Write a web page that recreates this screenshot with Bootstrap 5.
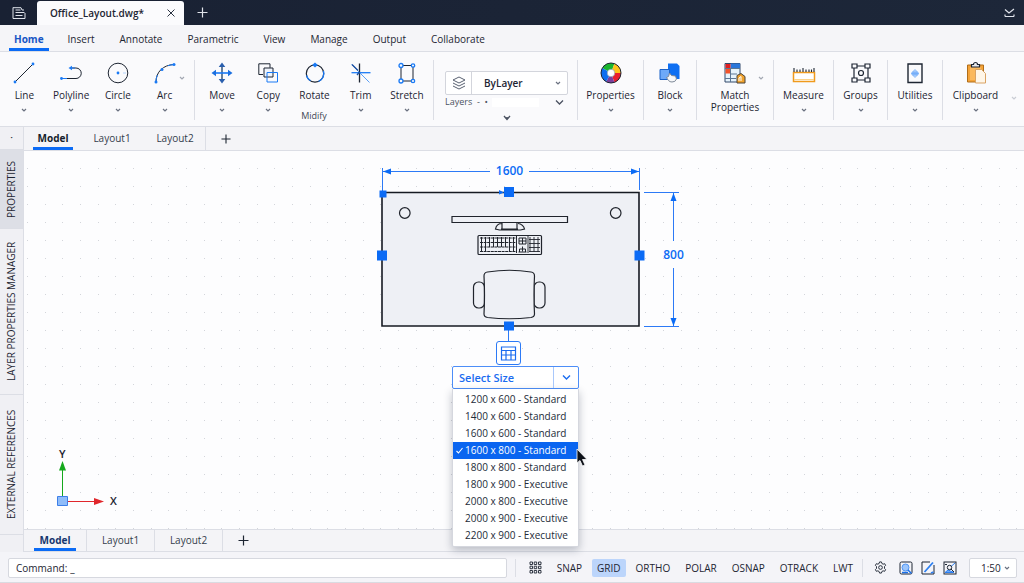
<!DOCTYPE html>
<html lang="en">
<head>
<meta charset="utf-8">
<meta name="viewport" content="width=device-width, initial-scale=1">
<title>Office_Layout.dwg</title>
<link rel="stylesheet" href="https://cdn.jsdelivr.net/npm/bootstrap@5.3.0/dist/css/bootstrap.min.css">
<style>
:root { --ink:#1d2532; --blue:#0b6bf5; --line:#dcdee5; --chrome:#f4f4f8; }
body { font-family:"Open Sans","Noto Sans",sans-serif; font-size:10px; line-height:16px; color:var(--ink); background:var(--chrome); }
button, input, select { font:inherit; color:inherit; }
button { background:none; border:0; padding:0; }
svg { display:block; fill:none; stroke:var(--ink); flex:none; }
.centered { display:grid; place-items:center; }
.titlebar { background:linear-gradient(90deg,#192133,#1d2739); height:25px; padding-right:9px; }
.titlebar svg { stroke:#dfe3ea; }
.file-tab { background:#fbfbfd; width:147px; border-radius:3px 3px 0 0; margin-top:1px; font-weight:600; padding:0 8px 0 13px; }
.titlebar .file-tab svg { stroke:#2a3342; }
.app-menu, .new-tab { width:37px; }
.menu-tabs { height:27px; padding-left:9px; background:#f5f5f8; border-bottom:1px solid var(--line); }
.menu-tabs a { color:inherit; text-decoration:none; line-height:24px; padding:2px 4px 0; margin-right:17px; border-bottom:3px solid transparent; }
.menu-tabs a.on { color:#1856c4; font-weight:700; border-color:var(--blue); padding:2px 5px 0; margin-right:15px; }
.ribbon { height:75px; background:#fafafc; border-bottom:1px solid var(--line); }
.r-group { flex:1 1 55px; border-right:1px solid var(--line); margin:8px 0 6px; min-width:0; position:relative; }
.g-draw { flex-basis:195px; padding:0 6px 0 1px; }
.g-modify { flex-basis:239px; padding:0 3px 0 4px; }
.g-layers { flex-basis:144px; padding:11px 9px 0 11px; }
.g-props { flex-basis:66px; }
.g-block { flex-basis:53px; }
.g-match { flex-basis:77px; }
.g-measure { flex-basis:60px; }
.g-groups { flex-basis:54px; }
.g-clip { flex-basis:65px; border:0; }
.g-end { flex-basis:16px; border:0; padding:29px 0 0 2px; }
.g-end .caret { stroke:#c9ccd4; }
.tool { display:flex; flex-direction:column; align-items:center; flex:1 1 0; min-width:0; line-height:12px; padding-top:1px; position:relative; white-space:nowrap; }
.tool svg.ico { width:24px; height:24px; margin-bottom:4px; }
.tool svg.caret { margin-top:6px; }
.caret { width:8px; height:6px; stroke:#6a7180; }
.tool svg.side-caret { position:absolute; left:50%; margin:0 0 0 13px; top:15px; stroke:#a2a7b2; }
.g-match svg.side-caret { margin-left:22px; }
.group-name { position:absolute; bottom:-2px; left:0; right:0; text-align:center; font-size:9px; line-height:12px; color:#3f4755; }
.layer-box { border:1px solid #d3d5dc; border-radius:2px; background:#fff; height:24px; }
.layer-box span { width:26px; border-right:1px solid #d3d5dc; }
.layer-box select, .scale select { appearance:none; border:0; background:transparent; outline:0; }
.layer-box select { font-weight:600; padding:0 0 0 12px; width:100%; }
.pick { position:relative; }
.pick svg { position:absolute; right:5px; top:50%; margin-top:-3px; pointer-events:none; }
.layer-row { font-size:9px; line-height:14px; color:#4c5362; }
.layer-row i { flex:1; height:9px; background:#fff; margin:0 16px 0 4px; }
.layer-row svg, .more { stroke:#4a5160; }
.side { width:24px; background:#f0f0f4; border-right:1px solid var(--line); }
.side button { writing-mode:vertical-rl; transform:rotate(180deg); border-top:1px solid var(--line); width:23px; text-align:center; line-height:23px; white-space:nowrap; }
.side button.on { background:#dddfe6; }
.side .s-top { height:23px; }
.side .s-prop { height:79px; }
.side .s-layer { height:166px; }
.side .s-ext { height:140px; }
.doc-tabs { height:24px; background:#f4f4f7; border-bottom:1px solid var(--line); }
.doc-tabs a { color:#353d4c; text-decoration:none; line-height:20px; padding-top:1px; border-bottom:3px solid transparent; text-align:center; }
.doc-tabs a.on { font-weight:700; color:#161e2c; border-color:var(--blue); }
.top-tabs { padding-left:9px; }
.top-tabs a { width:40px; margin-right:22px; }
.top-tabs a:nth-child(2) { margin:0 23px 0 -3px; }
.top-tabs .tail { width:1px; background:var(--line); margin-left:-12px; margin-right:15px; }
.low-tabs { height:23px; border-top:1px solid var(--line); }
.low-tabs .cell { width:68px; border-right:1px solid var(--line); display:flex; justify-content:center; }
.low-tabs .cell:first-child { width:63px; }
.low-tabs a { width:42px; line-height:16px; padding-top:2px; }
.low-tabs a.on { color:#17376f; }
.low-tabs button { margin-left:15px; }
.plane { position:relative; background:#fdfdfe; }
.grid-dots { position:absolute; inset:0; width:100%; height:100%; }
.desk { position:absolute; left:352px; top:11px; z-index:5; width:315px; }
.ucs { position:absolute; left:30px; bottom:19px; }
svg text { stroke:none; font-size:12px; font-weight:600; }
.ucs text { font-size:11px; }
.grip-btn { width:25px; height:24px; margin-left:120px; border:1px solid #2c7af6; border-radius:3px; background:#fff; margin-bottom:1px; }
.grip-btn svg, .size-head svg { stroke:#1a6cf0; }
.size-pick { width:127px; margin-left:76px; }
.size-head { height:23px; border:1px solid #4d8ef8; border-radius:2px; background:#fff; color:#1a6cf0; font-size:11px; }
.size-head .lbl { flex:1; text-align:left; padding-left:6px; font-weight:600; border-right:1px solid #a9c8fb; }
.size-head .dd { width:24px; }
.size-pick .dropdown-menu { position:static; display:block; width:100%; min-width:0; padding:2px 0 2px; border:1px solid #d5d7de; border-top:0; border-radius:0 0 2px 2px; box-shadow:0 3px 8px rgba(25,35,60,.28); font-size:10px; }
.size-pick .dropdown-item { padding:0 0 0 12px; line-height:17px; color:#232b38; position:relative; }
.size-pick .dropdown-item.active { background:#0a65f0; color:#fff; }
.dropdown-item .tick { position:absolute; left:2px; top:4px; stroke:#fff; }
.pointer { position:absolute; left:200px; top:286px; }
.status { height:31px; padding:1px 7px 0 8px; border-bottom:1px solid #d9dbe1; }
.cmd { flex:1; height:20px; border:1px solid #d6d8df; border-radius:2px; background:#fff; padding-left:7px; }
.cmd input { border:0; outline:0; padding:0 0 0 3px; flex:1; min-width:0; background:transparent; }
.vr-line { width:1px; height:18px; background:var(--line); }
.modes { gap:5px; }
.modes button { height:18px; padding:0 5px; border-radius:2px; line-height:18px; }
.modes button.on { background:#bcd5fb; }
.helpers { margin-left:11px; margin-right:12px; }
.scale { width:48px; height:20px; border:1px solid #d6d8df; border-radius:2px; background:#fff; }
.scale select { width:100%; padding:1px 0 0 11px; line-height:16px; }
</style>
</head>
<body class="d-flex flex-column vh-100 overflow-hidden">
<svg width="0" height="0" class="position-absolute" aria-hidden="true">
  <symbol id="caret" viewBox="0 0 8 6"><path d="M2 2l2 2 2-2" stroke-width="1.2"/></symbol>
  <symbol id="plus" viewBox="0 0 11 11"><path d="M5.500 .5v10M.5 5.500h10" stroke-width="1.200"/></symbol>
</svg>

<header class="titlebar d-flex">
  <button class="app-menu centered" aria-label="Application menu"><svg width="14" height="12" viewBox="0 0 14 12"><path d="M1 .5v11h12V6M1 .7h8l1 2.300h2M3.500 3h5M3.500 5.500h9M3.500 8.500h7" stroke-width="1"/></svg></button>
  <div class="file-tab d-flex align-items-center justify-content-between"><span>Office_Layout.dwg*</span><button aria-label="Close tab"><svg width="10" height="10" viewBox="0 0 10 10"><path d="M1.500 1.500l7 7M8.500 1.500l-7 7"/></svg></button></div>
  <button class="new-tab centered" aria-label="New tab"><svg width="11" height="11"><use href="#plus"/></svg></button>
  <button class="ms-auto" aria-label="Collapse"><svg width="11" height="10" viewBox="0 0 11 10"><path d="M1 1.500l4 3.500 5-4M1 8.500h9M1 6.500v2M10 6.500v2" stroke-width="1.200"/></svg></button>
</header>

<nav class="menu-tabs d-flex" aria-label="Ribbon">
  <a class="on" href="#">Home</a><a href="#">Insert</a><a href="#">Annotate</a><a href="#">Parametric</a><a href="#">View</a><a href="#">Manage</a><a href="#">Output</a><a href="#">Collaborate</a>
</nav>

<div class="ribbon d-flex" role="toolbar" aria-label="Home tools">
  <div class="r-group g-draw d-flex">
    <button class="tool"><svg class="ico" viewBox="0 0 24 24"><path d="M3 21L21 3"/><g fill="#1a7af5" stroke="none"><circle cx="3" cy="21" r="1.400"/><circle cx="21" cy="3" r="1.400"/></g></svg>Line<svg class="caret"><use href="#caret"/></svg></button>
    <button class="tool"><svg class="ico" viewBox="0 0 24 24"><path d="M2 17.500h15a5 5 0 0 0 0-10.500h-6"/><path d="M2 17.500h6M11 7h5" stroke="#1a7af5"/><g fill="#1a7af5" stroke="none"><circle cx="2.500" cy="17.500" r="1.400"/><path d="M9.500 7l3.500-2.200v4.400z"/></g></svg>Polyline<svg class="caret"><use href="#caret"/></svg></button>
    <button class="tool"><svg class="ico" viewBox="0 0 24 24"><circle cx="12" cy="12" r="9.800"/><circle cx="12" cy="12" r="1.400" fill="#1a7af5" stroke="none"/><path d="M17 12h3" stroke="#b5d4fb"/></svg>Circle<svg class="caret"><use href="#caret"/></svg></button>
    <button class="tool"><svg class="ico" viewBox="0 0 24 24"><path d="M3 21C3 11 10 4 21 3.500"/><path d="M3 21c0-3 .5-5 1.500-7M15 4.700c2-.8 4-1 6-1.200" stroke="#1a7af5"/><g fill="#1a7af5" stroke="none"><circle cx="3" cy="21" r="1.500"/><circle cx="9" cy="8.500" r="1.500"/><circle cx="21" cy="3.500" r="1.500"/></g></svg>Arc<svg class="caret"><use href="#caret"/></svg><svg class="caret side-caret"><use href="#caret"/></svg></button>
  </div>
  <div class="r-group g-modify d-flex">
    <button class="tool"><svg class="ico" viewBox="0 0 24 24"><path d="M12 4v16" stroke="#27496f" stroke-width="1.400"/><path d="M4 12h16" stroke="#1a7af5" stroke-width="1.600"/><g stroke="none" fill="#2a5fae"><path d="M12 1.500l3.300 4.500H8.700zM12 22.500l3.300-4.500H8.700z"/><path fill="#1a6fe0" d="M1.500 12L6 8.700v6.600zM22.500 12L18 8.700v6.600z"/></g></svg>Move<svg class="caret"><use href="#caret"/></svg></button>
    <button class="tool"><svg class="ico" viewBox="0 0 24 24"><path d="M7 13.500H2.800V2.800H14v4"/><path d="M8 7h9v9H8z" fill="#eef3fb"/><path d="M11 11.500h10.500V21H11z" stroke="#1a7af5"/></svg>Copy<svg class="caret"><use href="#caret"/></svg></button>
    <button class="tool"><svg class="ico" viewBox="0 0 24 24"><circle cx="12" cy="12.500" r="8.700" stroke-width="1.200"/><path d="M20.500 10a8.700 8.700 0 0 1-5 10.500M3.500 14.500a8.700 8.700 0 0 0 4 5.300" stroke="#1a7af5" stroke-width="1.300"/><path d="M12 1.500l2.800 2.500L12 6.500 9.200 4z" fill="#1a7af5" stroke="none"/></svg>Rotate</button>
    <button class="tool"><svg class="ico" viewBox="0 0 24 24"><path d="M10.500 2.500v19" stroke-width="1.300"/><path d="M2.500 3.500l18 18" stroke="#5ba0f7"/><path d="M2.500 11.700h19" stroke="#1a7af5" stroke-width="1.300"/><path d="M3 3.500l6 6M8 14l2.500-3" stroke="#1b4fa0" stroke-width="1.300"/></svg>Trim<svg class="caret"><use href="#caret"/></svg></button>
    <button class="tool"><svg class="ico" viewBox="0 0 24 24"><path d="M6 4.500h12v15.500H6z"/><g fill="#fafafc" stroke="#1a7af5" stroke-width="1.300"><circle cx="6" cy="4.500" r="2"/><circle cx="18" cy="4.500" r="1.700"/><circle cx="6" cy="20" r="2"/><circle cx="18" cy="20" r="1.700"/></g></svg>Stretch<svg class="caret"><use href="#caret"/></svg></button>
    <span class="group-name">Midify</span>
  </div>
  <div class="r-group g-layers">
    <div class="layer-box d-flex"><span class="centered"><svg width="16" height="16" viewBox="0 0 16 16"><path d="M8 2l6 3-6 3-6-3zM2 8l6 3 6-3M2 11l6 3 6-3" stroke="#596171"/></svg></span><div class="pick flex-fill d-flex"><select aria-label="Layer"><option>ByLayer</option></select><svg class="caret"><use href="#caret"/></svg></div></div>
    <div class="layer-row d-flex align-items-center"><span>Layers&nbsp; -&nbsp; •</span><i></i><svg class="me-1" width="9" height="7" viewBox="0 0 9 7"><path d="M1 1.500l3.500 3.500L8 1.500" stroke-width="1.300"/></svg></div>
    <svg class="more mx-auto mt-1" width="10" height="8" viewBox="0 0 10 8"><path d="M2 3l3 3.500L8 3M5 6V4" stroke-width="1.300"/></svg>
  </div>
  <div class="r-group g-props d-flex"><button class="tool"><svg class="ico" viewBox="0 0 24 24"><g stroke="none"><path fill="#19b52e" d="M12 12L3.300 7A10 10 0 0 1 15.500 2.600z"/><path fill="#ffc21a" d="M12 12l3.500-9.400A10 10 0 0 1 22 12z"/><path fill="#ea1f2d" d="M12 12h10a10 10 0 0 1-6.500 9.400z"/><path fill="#7a3f9d" d="M12 12l3.500 9.400A10 10 0 0 1 7 20.700z"/><path fill="#0d6ef0" d="M12 12L7 20.700A10 10 0 0 1 3.300 7z"/></g><circle cx="12" cy="12" r="10"/><circle cx="12" cy="12" r="3.800" fill="#fff" stroke="#8090a0" stroke-width=".6"/></svg>Properties<svg class="caret"><use href="#caret"/></svg></button></div>
  <div class="r-group g-block d-flex"><button class="tool"><svg class="ico" viewBox="0 0 24 24"><path d="M10 2.500h9l2.500 2.500v13H10z" fill="#0e6ff2" stroke="none"/><path d="M2 8.500h9.500v10H2z" fill="#6ea9f8" stroke="#1b62c8"/><path d="M8.500 16.500l2-1 1-3.500 2 2.500 4 .5 1 3a4.500 4.500 0 0 1-4.500 3c-3 0-4-2-5.500-4.500z" fill="#f7f8fa" stroke="#7f8998"/></svg>Block<svg class="caret"><use href="#caret"/></svg></button></div>
  <div class="r-group g-match d-flex"><button class="tool"><svg class="ico" viewBox="0 0 24 24"><path d="M2 2.500h15v18.500H2z" fill="#e6f3fc" stroke="#33496a"/><path d="M7.500 2.500H17V7H7.500z" fill="#2a76da" stroke="none"/><path d="M2.500 3h5v4h-5z" fill="#e01f22" stroke="none"/><path d="M2.500 8h4.500v4.500H2.500z" fill="#f2532b" stroke="none"/><path d="M2 7.500h15M7.500 13H14M2 17.500h11M7.500 7v14" stroke="#5c7694"/><path d="M14 14.500l4-2 4 3v6.500h-8z" fill="#f0a22c" stroke="#4b4338"/><path d="M16 20v-3l2-1.500V20" stroke="#fff"/></svg><span>Match<br>Properties</span><svg class="caret side-caret"><use href="#caret"/></svg></button></div>
  <div class="r-group g-measure d-flex"><button class="tool"><svg class="ico" viewBox="0 0 24 24"><path d="M1.500 11.500h21v9h-21z" fill="#fff" stroke="#f09a1c" stroke-width="1.500"/><path d="M2 18.500h20" stroke="#fbd28a"/><path d="M2 7v4M5 8.500V11M8 8.500V11M11 7v4M14 8.500V11M17 8.500V11M22 7v4M19.500 8.500V11" stroke-width="1.100"/></svg>Measure<svg class="caret"><use href="#caret"/></svg></button></div>
  <div class="r-group g-groups d-flex"><button class="tool"><svg class="ico" viewBox="0 0 24 24" stroke-width="1.200"><path d="M3 3h5v4H3zM16 3h5v4h-5zM3 17h5v4H3zM16 17h5v4h-5zM8 5h8M8 19h8M5 7v10M19 7v10"/><circle cx="12" cy="12" r="2.500"/></svg>Groups<svg class="caret"><use href="#caret"/></svg></button></div>
  <div class="r-group d-flex"><button class="tool"><svg class="ico" viewBox="0 0 24 24"><path d="M5 3h14v18.500H5z" stroke-width="1.400"/><path d="M8.500 11h7v3h-7z" fill="#8ebdfb" stroke="none"/><path d="M8 12.500h8M12 8.500l2.500 2.500h-5zM12 16.500l2.500-2.500h-5z" stroke="#6aa7f8" fill="#b9d7fd" stroke-width=".7"/></svg>Utilities<svg class="caret"><use href="#caret"/></svg></button></div>
  <div class="r-group g-clip d-flex"><button class="tool"><svg class="ico" viewBox="0 0 24 24"><path d="M3.500 4h16v17h-16z" fill="#f4a338" stroke="#b06d18"/><path d="M6 6h11v4l-5 9H6z" fill="#fbb95d" stroke="none"/><path d="M7.500 6V3.500h2a2 2 0 0 1 4 0h2V6z" fill="#e9ebef" stroke-width="1.200"/><path d="M11.500 8.500h6l4 4V22h-10z" fill="#fff6e8" stroke="#d9a364"/></svg>Clipboard<svg class="caret"><use href="#caret"/></svg></button></div>
  <div class="r-group g-end"><button aria-label="More tools"><svg class="caret"><use href="#caret"/></svg></button></div>
</div>

<main class="d-flex flex-fill" style="min-height:0">
  <aside class="side d-flex flex-column" aria-label="Palettes">
    <button class="s-top" aria-label="Expand">·</button>
    <button class="s-prop on">PROPERTIES</button>
    <button class="s-layer">LAYER PROPERTIES MANAGER</button>
    <button class="s-ext">EXTERNAL REFERENCES</button>
  </aside>
  <div class="d-flex flex-column flex-fill" style="min-width:0">
    <nav class="doc-tabs top-tabs d-flex" aria-label="Layouts"><a class="on" href="#">Model</a><a href="#">Layout1</a><a href="#">Layout2</a><span class="tail"></span><button aria-label="Add layout"><svg width="10" height="10"><use href="#plus"/></svg></button></nav>
    <section class="plane flex-fill" aria-label="Drawing">
      <svg class="grid-dots" aria-hidden="true"><defs><pattern id="dots" width="53" height="18" patternUnits="userSpaceOnUse"><path d="M3 17h1v1h-1zM21 17h1v1h-1zM38 17h1v1h-1z" fill="#d3d5da" stroke="none"/></pattern></defs><rect width="100%" height="100%" fill="url(#dots)" stroke="none"/></svg>
      <div class="desk">
        <svg width="315" height="179" viewBox="376 162 315 179">
          <path d="M382 192.500h257v133.500H382z" fill="#eef0f5" stroke="#161a22" stroke-width="1.600"/>
          <g stroke="#2c7af6"><path d="M382.500 168v24M639.500 168v22M383 171.500h107M529 171.500h110M644 192.500h35M644 326.500h35M673.500 193v48M673.500 268v58M508.500 326v15"/></g>
          <g fill="#0b6bf5" stroke="none"><path d="M383 171.500l8-3v6zM639 171.500l-8-3v6zM673.500 193l-3 8h6zM673.500 326l-3-8h6z"/>
          <text x="509.500" y="175" text-anchor="middle">1600</text><text x="673.500" y="259" text-anchor="middle">800</text></g>
          <g stroke="#20242c" stroke-width="1.200"><circle cx="404.800" cy="213" r="5.300"/><circle cx="615.700" cy="213" r="5.300"/>
          <path d="M452 216.500h115.500v6H452z"/><path d="M502 223v5.500M517 223v5.500M502 223.500c-4 0-6 3-6.500 5.500l4 1h21l4-1c-.5-2.500-3-5.500-6.500-5.500M501 229h17"/>
          <rect x="478" y="235.500" width="63.500" height="19" rx="1"/></g>
          <g stroke="#20242c"><path d="M480 238h36M480 242.500h36M480 247h36M480 251.500h36" stroke-dasharray="3 .6"/><path d="M481.500 237v15M485.500 237v15M489.500 237v10M493.500 237v10M497.500 237v10M501.500 237v10M505.500 237v10M509.500 237v15M513.500 237v15M516.500 236v17"/><path d="M519 238h7v6h-7zM522.500 238v6M519 241h7M518.500 252h8M519.500 249h6v3M522.500 246.500v5M519.500 249v3"/><path d="M530 237v15M534 237v15M538 237v15M529 239.500h11M529 243.500h11M529 247.500h11M529 251.500h11M528 236v17" stroke-width=".9"/></g>
          <g stroke="#20242c" stroke-width="1.200"><rect x="473.500" y="282" width="11" height="26" rx="5"/><rect x="534" y="282" width="11" height="26" rx="5"/><path d="M487.500 272q22-3.500 43.500 0 3.500.5 3.500 4-1 19 0 38 0 3-3.500 3.500-22 2.500-43.500 0-3.500-.5-3.500-3.500 1-19 0-38 0-3.500 3.500-4z" fill="#eef0f5"/></g>
          <g fill="#0b6bf5" stroke="none"><path d="M379.500 190.500h7v7h-7zM504 187h10v10h-10zM377 250.500h10v10h-10zM634.500 250.500h10v10h-10zM504 321.500h10v9h-10zM499 190l5 2.500-5 2z"/></g>
        </svg>
        <button class="grip-btn centered" aria-label="Size table"><svg width="17" height="15" viewBox="0 0 17 15" stroke-width="1.200"><path d="M1.500 1h14v13h-14zM1.500 4.500h14M1.500 9h14M6 4.500V14M11 4.500V14"/></svg></button>
        <div class="size-pick">
          <div class="size-head d-flex align-items-stretch"><button class="lbl">Select Size</button><button class="dd centered" aria-label="Open size list" aria-expanded="true"><svg width="9" height="7" viewBox="0 0 9 7"><path d="M1 1.500L4.500 5 8 1.500" stroke-width="1.400"/></svg></button></div>
          <div class="dropdown-menu show">
            <button class="dropdown-item">1200 x 600 - Standard</button>
            <button class="dropdown-item">1400 x 600 - Standard</button>
            <button class="dropdown-item">1600 x 600 - Standard</button>
            <button class="dropdown-item active"><svg class="tick" width="9" height="9" viewBox="0 0 9 9"><path d="M1.500 5l2 2L7.500 2" stroke-width="1.100"/></svg>1600 x 800 - Standard</button>
            <button class="dropdown-item">1800 x 800 - Standard</button>
            <button class="dropdown-item">1800 x 900 - Executive</button>
            <button class="dropdown-item">2000 x 800 - Executive</button>
            <button class="dropdown-item">2000 x 900 - Executive</button>
            <button class="dropdown-item">2200 x 900 - Executive</button>
          </div>
        </div>
        <svg class="pointer" width="12" height="19" viewBox="0 0 12 19"><path d="M1 1v14l3-2.500L6.500 18l2.500-1-2.500-5.500H11z" fill="#0d1118" stroke="#fff" stroke-width=".8"/></svg>
      </div>
      <svg class="ucs" width="66" height="64" viewBox="54 446 66 64">
        <path d="M62.500 496V470" stroke="#15a81d"/><path d="M62.500 461l3.500 9.500h-7z" fill="#15a81d" stroke="none"/>
        <path d="M67 501.500h28" stroke="#e0262b"/><path d="M104 501.500l-10 3.500v-7z" fill="#e0262b" stroke="none"/>
        <path d="M57.500 496.500h10v9h-10z" fill="#8fbcf9" stroke="#3d7fe8"/>
        <g fill="#1d2532"><text x="59" y="458">Y</text><text x="110" y="505">X</text></g>
      </svg>
    </section>
    <nav class="doc-tabs low-tabs d-flex" aria-label="Sheets"><div class="cell"><a class="on" href="#">Model</a></div><div class="cell"><a href="#">Layout1</a></div><div class="cell"><a href="#">Layout2</a></div><button aria-label="Add sheet"><svg width="11" height="11"><use href="#plus"/></svg></button></nav>
  </div>
</main>

<footer class="status d-flex align-items-center">
  <div class="cmd d-flex align-items-center"><label for="cmd">Command:</label><input id="cmd" type="text" value="_"></div>
  <span class="vr-line ms-2"></span>
  <div class="modes d-flex align-items-center ms-2">
    <button aria-label="Model space"><svg width="13" height="13" viewBox="0 0 13 13"><path d="M1 1h2.500v2.500H1zM5.200 1h2.500v2.500H5.200zM9.500 1H12v2.500H9.500zM1 5.200h2.500v2.500H1zM5.200 5.200h2.500v2.500H5.200zM9.500 5.200H12v2.500H9.500zM1 9.500h2.500V12H1zM5.200 9.500h2.500V12H5.200zM9.500 9.500H12V12H9.500z" stroke-width=".9"/></svg></button>
    <button>SNAP</button><button class="on">GRID</button><button>ORTHO</button><button>POLAR</button><button>OSNAP</button><button>OTRACK</button><button>LWT</button>
  </div>
  <span class="vr-line ms-1"></span>
  <div class="helpers d-flex align-items-center gap-2">
    <button aria-label="Settings"><svg width="13" height="13" viewBox="0 0 14 14"><path d="M6 1h2l.5 1.700 1.300.7 1.700-.5 1 1.800L11.300 6v2l1.200 1.300-1 1.800-1.700-.5-1.300.7L8 13H6l-.5-1.700-1.300-.7-1.700.5-1-1.800L2.700 8V6L1.500 4.700l1-1.800 1.700.5 1.300-.7z"/><circle cx="7" cy="7" r="2"/></svg></button>
    <button class="ms-1" aria-label="Preview"><svg width="14" height="14" viewBox="0 0 14 14"><rect x="1" y="1" width="12" height="12" rx="1.500"/><circle cx="6.500" cy="6.500" r="3.500" fill="#9cc5fb" stroke="#4f94f3"/><path d="M9 9l3.500 3.500M3 11.500h6" stroke="#1a6fe8" stroke-width="1.500"/></svg></button>
    <button aria-label="Edit"><svg width="14" height="14" viewBox="0 0 14 14"><path d="M9 1H1v12h12V4"/><path d="M3.500 11L12 1.500M10 12l2.500-1" stroke="#2d80f2" stroke-width="1.800"/></svg></button>
    <button aria-label="Snap preview"><svg width="14" height="14" viewBox="0 0 14 14"><rect x="1" y="1" width="12" height="12"/><path d="M2 11.500l3-2.500 6 2.500zM8 5.500L12 2" fill="#6aa7f8" stroke="#2d80f2"/><circle cx="6.500" cy="6.500" r="2.200"/><path d="M8 8l3 3M2 3.500h2"/></svg></button>
  </div>
  <div class="scale pick"><select aria-label="Scale"><option>1:50</option></select><svg class="caret"><use href="#caret"/></svg></div>
</footer>
<script src="https://cdn.jsdelivr.net/npm/bootstrap@5.3.0/dist/js/bootstrap.bundle.min.js"></script>
</body>
</html>
